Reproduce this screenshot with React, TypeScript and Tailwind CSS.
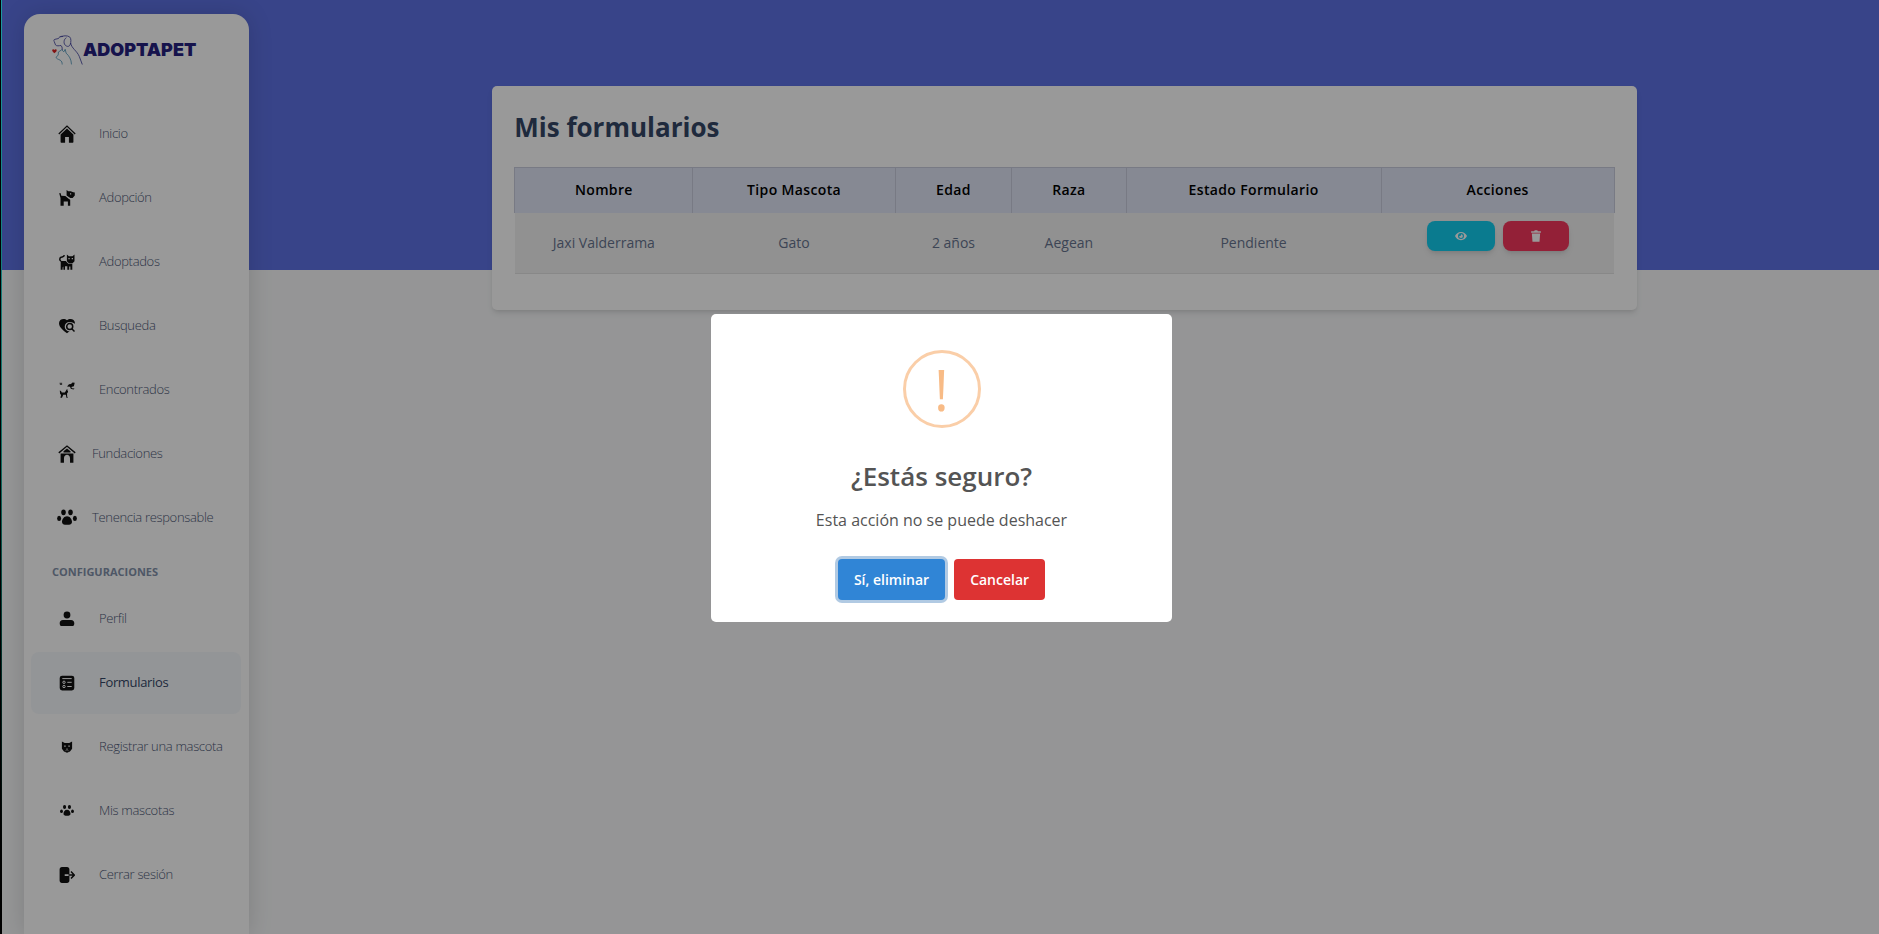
import type { ReactNode } from "react";

function Icon({ className = "size-4", children }: { className?: string; children: ReactNode }) {
  return (
    <svg viewBox="0 0 16 16" className={className} fill="currentColor" aria-hidden="true">
      {children}
    </svg>
  );
}

const house = (
  <Icon className="size-[18px]">
    <path d="M.7 8 8 1l7.300 7" fill="none" stroke="currentColor" strokeWidth="1.100" />
    <path d="M8 3 2.300 8.500V15c0 .4.2.7.6.7h3.400v-5h3.400v5h3.400c.4 0 .6-.3.6-.7V8.500z" />
  </Icon>
);

const dog = (
  <Icon>
    <path d="M.2 3.300 1.500 2.900 2.300 5.700 6.300 5.900 10 8.900 11.200 9.800v5.900H8.900v-4.300H4.700v4.300H1.500V8z" />
    <path
      fillRule="evenodd"
      d="M7.600 0 9.300 1.200h2.400l2.600 1 1.500.2v3.200l-2.200 2.300-2.300.2-3.700-2.600zM11 3.200v1.200h1.200V3.200z"
    />
  </Icon>
);

const cat = (
  <Icon>
    <path d="M5.300 1.200c-.2 1.600-1.300 1.600-2.500 1.900C.2 3.600.3 6.300 2 7.200" fill="none" stroke="currentColor" strokeWidth="1.500" />
    <path d="M1.700 6.900h5l2.600 2.900h4v5.900h-1.900v-3.300h-1.200v3.300H8.300v-3.500H6v3.500H4.400v-3.300l-.8 1v2.300H1.700z" />
    <path
      fillRule="evenodd"
      d="M7.900.6l2 1.700h3.600l2-1.700v6.600l-2 2H9.900l-2-2zM9.400 4v1.200h1.300V4zm3.300 0v1.200H14V4z"
    />
  </Icon>
);

const heartSearch = (
  <Icon>
    <path d="M8 2.300C5.500-.2 0 .7 0 5.300c0 4 4.600 7.400 8 10 3.400-2.600 8-6 8-10C16 .7 10.500-.2 8 2.300z" />
    <path d="M10.500 3.900a4.800 4.800 0 1 0 0 9.600l3 2.500H16V5.800l-2.500-1.200a4.800 4.800 0 0 0-3-.7z" fill="#fff" />
    <circle cx="10.700" cy="8.600" r="3" fill="none" stroke="currentColor" strokeWidth="1.500" />
    <path d="m12.800 10.800 2.700 2.700" stroke="currentColor" strokeWidth="1.500" />
  </Icon>
);

const petsFound = (
  <Icon>
    <path d="M.5.8h2.600v2.200H1z" opacity=".7" />
    <path d="M8 4.600 10 2.300l2-.3 1.500-1.500 2.200.2-.8 3.500-2.600.9L13 6.300l2.600.2-1.200 1-2.600-.8-.8-1.900z" />
    <path d="M.8 8.500 2 9l.8 1.500h3l1.500-2.300 1.500.2.3 1.600-1 1.300v3l.8 1.400H7.400l-.5-2.900H4.300L3 15.700H1.400l.7-2.700-1-1.300z" />
    <path d="m7 8.400 1.500-.6" stroke="currentColor" />
  </Icon>
);

const shelter = (
  <Icon className="size-[18px]">
    <path d="M.7 7 8 .9 15.300 7" fill="none" stroke="currentColor" strokeWidth="1.200" />
    <path d="M8 3 4.900 5.500v1.200h6.200V5.500z" />
    <path d="M2.300 7.500h11.400v8.300h-3V12c0-4.300-5.400-4.300-5.400 0v3.800h-3z" />
  </Icon>
);

function Paw({ className }: { className: string }) {
  return (
    <Icon className={className}>
      <ellipse cx="5.200" cy="3.400" rx="1.800" ry="2.300" />
      <ellipse cx="10.800" cy="3.400" rx="1.800" ry="2.300" />
      <ellipse cx="1.700" cy="8.300" rx="1.600" ry="2.100" />
      <ellipse cx="14.300" cy="8.300" rx="1.600" ry="2.100" />
      <path d="M8 6.600c2.400 0 4 2.500 4 4.500 0 1.700-1.300 2.300-4 2.300s-4-.6-4-2.300c0-2 1.600-4.500 4-4.500z" />
    </Icon>
  );
}

const person = (
  <Icon>
    <circle cx="8" cy="4" r="3.400" />
    <path d="M4 8.900h8c2.200 0 3.300 1.400 3.300 3.300 0 1.900-.7 2.900-2.300 2.900H3c-1.600 0-2.300-1-2.300-2.900 0-1.900 1.100-3.300 3.300-3.300z" />
  </Icon>
);

const form = (
  <Icon>
    <rect x=".7" y=".7" width="14.600" height="14.800" rx="2.400" />
    <g fill="none" stroke="#fff">
      <path d="M3.300 3.600h9.400M8.300 7.300h4.400M8.300 11.500h4.400" />
      <circle cx="5" cy="7.300" r="1.200" />
      <circle cx="5" cy="11.500" r="1.200" />
    </g>
  </Icon>
);

const catFace = (
  <Icon className="size-3">
    <path
      fillRule="evenodd"
      d="M1.200.8 5 2.500h6L14.800.8v9.400L12 14l-4 1.500L4 14l-2.800-3.800zM4.300 6v1.600h1.900V6zm5.500 0v1.600h1.900V6zM7 10l1 1.200L9 10z"
    />
    <path d="M6 13l2-1.600 2 1.600" fill="none" stroke="#fff" strokeWidth=".9" />
  </Icon>
);

const logout = (
  <Icon>
    <path d="M3 0h5c1.500 0 2.400.9 2.400 2.400v4.900H5.700v1.600h4.700v4.700c0 1.500-.9 2.400-2.400 2.400H3C1.500 16 .6 15.100.6 13.600V2.400C.6.900 1.500 0 3 0z" />
    <path d="M9.500 8.100h5.700M12 4.600l3.300 3.500-3.300 3.500" fill="none" stroke="currentColor" strokeWidth="1.500" />
  </Icon>
);

interface NavItem {
  label: string;
  icon: ReactNode;
  near?: boolean;
  active?: boolean;
}

const mainItems: NavItem[] = [
  { label: "Inicio", icon: house },
  { label: "Adopción", icon: dog },
  { label: "Adoptados", icon: cat },
  { label: "Busqueda", icon: heartSearch },
  { label: "Encontrados", icon: petsFound },
  { label: "Fundaciones", icon: shelter, near: true },
  { label: "Tenencia responsable", icon: <Paw className="size-5" />, near: true },
];

const settingItems: NavItem[] = [
  { label: "Perfil", icon: person },
  { label: "Formularios", icon: form, active: true },
  { label: "Registrar una mascota", icon: catFace },
  { label: "Mis mascotas", icon: <Paw className="size-3.5" /> },
  { label: "Cerrar sesión", icon: logout },
];

function NavList({ items }: { items: NavItem[] }) {
  return (
    <ul className="flex flex-col gap-0.5 pr-2 pl-[7px]">
      {items.map((item) => (
        <li key={item.label}>
          <a
            href="#"
            aria-current={item.active ? "page" : undefined}
            className={`flex h-[62px] items-center rounded-lg pl-5 text-[13px] tracking-tight whitespace-nowrap ${
              item.active ? "bg-[#f6f9fc] font-medium text-[#344767]" : "font-light text-[#4c5775]"
            } ${item.near ? "gap-[9px]" : "gap-4"}`}
          >
            <span className="flex w-8 shrink-0 justify-center text-[#111]">{item.icon}</span>
            {item.label}
          </a>
        </li>
      ))}
    </ul>
  );
}

function Logo() {
  return (
    <a href="#" className="flex h-[30px] items-center text-[#25217f]" aria-label="Adoptapet">
      <svg viewBox="0 0 31 30" className="h-[30px] w-[31px]" fill="none" strokeWidth=".8" aria-hidden="true">
        <g stroke="#3a3a9a">
          <path d="M11 1.600C8.500.8 7 2 6.500 3.500L3 4.300c-1.400.3-1.200 1.400-.8 2.200l1.300 3.400c1.200 1.500 3.500.8 5.500.6l1 1.500.3 3" />
          <path d="M8.500 2C11 .6 15 .3 17.500 1.800c2 1.500 1.500 5.700.7 7.700-.8 2-2.400 2.200-3.600 1.600-2-.9-2.800-2.700-2.500-4.700.1-1.600 1-3 2.300-3.700" />
          <path d="M18.700 8c.6 5.200 6.500 8 8.600 13.500l3 8" />
        </g>
        <path
          stroke="#4a93b8"
          d="M9.700 14.800 6.400 17l-.2 3-2 2.200c-.4 1.400 2.200 2 4 3 1.500.9 2 2.300 2 4.300M9.700 14.800l2.100 2 1.400-2.500.9 3.800c3 2.700 5.200 6.200 5.400 11.300"
        />
        <path fill="#d92020" d="M2.300 18.300C.8 17 .1 16.200.2 15.100c.2-1.200 1.700-1.200 2.200-.1.700-1 2.400-.8 2.300.5-.1 1.100-1.200 1.800-2.400 2.800z" />
      </svg>
      <span className="font-['Inter',sans-serif] text-[18px] leading-none font-black">ADOPTAPET</span>
    </a>
  );
}

const columns = [
  { label: "Nombre", width: "w-[16.2%]" },
  { label: "Tipo Mascota", width: "w-[18.4%]" },
  { label: "Edad", width: "w-[10.6%]" },
  { label: "Raza", width: "w-[10.4%]" },
  { label: "Estado Formulario", width: "w-[23.2%]" },
  { label: "Acciones", width: "w-[21.2%]" },
];

function FormsCard() {
  return (
    <section className="w-[70.25%] rounded-[5px] bg-white px-[22px] pt-5 pb-9 shadow-md">
      <h1 className="text-[26px] leading-[42px] font-bold text-[#344767]">Mis formularios</h1>
      <table className="mt-[19px] w-full table-fixed border-collapse text-center text-sm">
        <thead>
          <tr className="h-[45px] bg-[#dfe5f5] text-black">
            {columns.map((column) => (
              <th key={column.label} className={`border border-b-0 border-[#c9ccdd] font-semibold tracking-wide ${column.width}`}>
                {column.label}
              </th>
            ))}
          </tr>
        </thead>
        <tbody>
          <tr className="h-[61px] border-b border-[#e3e3e3] bg-[#f2f2f2] text-[#67748e]">
            <td>Jaxi Valderrama</td>
            <td>Gato</td>
            <td>2 años</td>
            <td>Aegean</td>
            <td>Pendiente</td>
            <td className="align-top">
              <div className="flex justify-center gap-2 pt-2">
                <button
                  type="button"
                  aria-label="Ver formulario"
                  className="flex h-[30px] w-[68px] items-center justify-center rounded-lg bg-[#11cdef] text-white shadow-md"
                >
                  <Icon className="h-3 w-3">
                    <path
                      fillRule="evenodd"
                      d="M8 2.500c3.800 0 6.700 2.500 8 5.500-1.300 3-4.200 5.500-8 5.500S1.300 11 0 8c1.300-3 4.200-5.500 8-5.500zM8 4a4 4 0 1 0 0 8 4 4 0 0 0 0-8z"
                    />
                    <path d="M8 5.500A2.500 2.500 0 1 1 5.500 8C7 8.500 8.300 7.200 8 5.500z" />
                  </Icon>
                </button>
                <button
                  type="button"
                  aria-label="Eliminar formulario"
                  className="flex h-[30px] w-[66px] items-center justify-center rounded-lg bg-[#f5365c] text-white shadow-md"
                >
                  <Icon className="h-3 w-3">
                    <path d="M1.500 1.500h4l.8-1.200h3.400l.8 1.200h4v2h-13zM2.500 4.500h11l-.8 11H3.300z" />
                  </Icon>
                </button>
              </div>
            </td>
          </tr>
        </tbody>
      </table>
    </section>
  );
}

function ConfirmDialog() {
  return (
    <div className="fixed inset-0 z-20 flex items-center justify-center bg-black/40 pt-0.5 pl-1">
      <div
        role="alertdialog"
        aria-modal="true"
        aria-labelledby="confirm-title"
        aria-describedby="confirm-text"
        className="flex w-[461px] max-w-full flex-col items-center rounded-[5px] bg-white pt-9 pb-[22px] text-[#545454]"
      >
        <div className="flex size-[78px] items-center justify-center rounded-full border-[3px] border-[#facea8] text-[56px] leading-none text-[#f8bb86]">
          <span aria-hidden="true">!</span>
        </div>
        <h2 id="confirm-title" className="mt-7 text-[26px] leading-10 font-semibold">
          ¿Estás seguro?
        </h2>
        <p id="confirm-text" className="mt-3 text-base leading-6">
          Esta acción no se puede deshacer
        </p>
        <div className="mt-[27px] flex gap-[9px] text-sm font-semibold text-white">
          <button type="button" className="h-[41px] rounded-[4px] bg-[#3085d6] px-4 ring-3 ring-[#6496c8]/50">
            Sí, eliminar
          </button>
          <button type="button" className="h-[41px] rounded-[4px] bg-[#dd3333] px-4">
            Cancelar
          </button>
        </div>
      </div>
    </div>
  );
}

export default function App() {
  return (
    <div className="relative h-screen overflow-hidden bg-[#f8f9fa] font-['Open_Sans',sans-serif]">
      <div className="absolute inset-x-0 top-0 h-[270px] bg-[#5e72e4]" />
      <div className="absolute inset-y-0 left-0 z-30 flex w-0.5">
        <div className="w-px bg-black" />
        <div className="w-px bg-linear-to-b from-[#1d9aa0] via-[#0f6a60] to-black" />
      </div>
      <div className="relative flex h-full">
        <aside className="mt-3.5 ml-6 w-[225px] shrink-0 rounded-t-2xl bg-white pt-[21px] shadow-[0_0_24px_rgba(0,0,0,0.15)]">
          <div className="pl-7">
            <Logo />
          </div>
          <nav className="mt-[38px]" aria-label="Menú principal">
            <NavList items={mainItems} />
            <h6 className="mt-3.5 mb-[7px] pl-7 text-[11px] leading-[18px] font-bold text-[#8392ab] uppercase">
              Configuraciones
            </h6>
            <NavList items={settingItems} />
          </nav>
        </aside>
        <main className="flex min-w-0 flex-1 items-start justify-center pt-[86px] pl-px">
          <FormsCard />
        </main>
      </div>
      <ConfirmDialog />
    </div>
  );
}
